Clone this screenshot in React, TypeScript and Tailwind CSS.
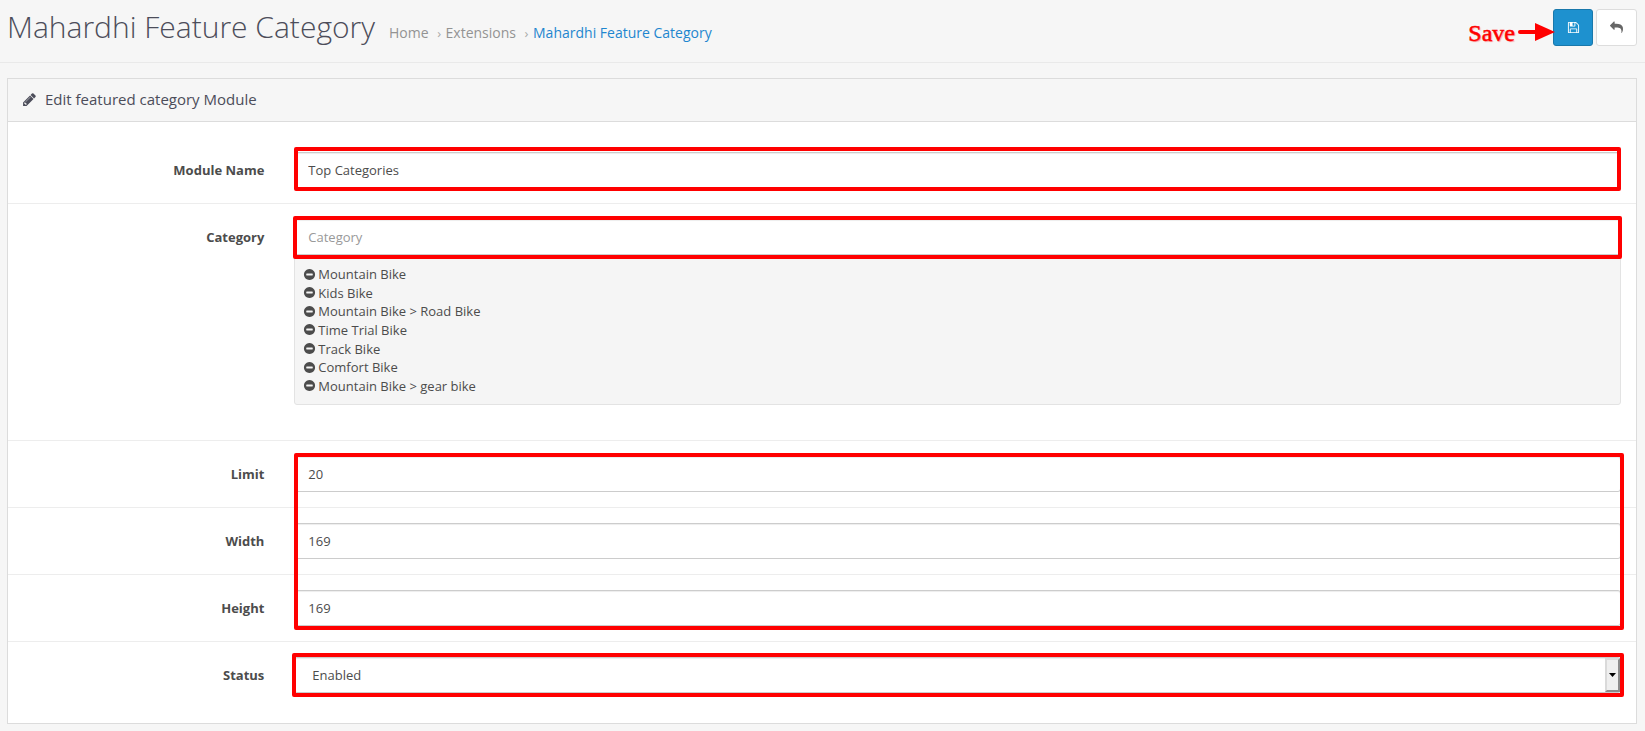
import React from "react";

const PENCIL =
  "M491 1536l91-91-235-235-91 91v107h128v128h107zm523-928q0-22-22-22-10 0-17 7l-542 542q-7 7-7 17 0 22 22 22 10 0 17-7l542-542q7-7 7-17zm-54-192l416 416-832 832h-416v-416zm683 96q0 53-37 90l-166 166-416-416 166-165q36-38 90-38 53 0 91 38l235 234q37 39 37 91z";
const FLOPPY =
  "M512 1536h768v-384h-768v384zm896 0h128v-896q0-14-10-38.5t-20-34.5l-281-281q-10-10-34-20t-39-10v416q0 40-28 68t-68 28h-576q-40 0-68-28t-28-68v-416h-128v1280h128v-416q0-40 28-68t68-28h832q40 0 68 28t28 68v416zm-384-928v-320q0-13-9.5-22.5t-22.5-9.5h-192q-13 0-22.5 9.5t-9.5 22.5v320q0 13 9.5 22.5t22.5 9.5h192q13 0 22.5-9.5t9.5-22.5zm640 32v928q0 40-28 68t-68 28h-1344q-40 0-68-28t-28-68v-1344q0-40 28-68t68-28h928q40 0 88 20t76 48l280 280q28 28 48 76t20 88z";
const REPLY =
  "M1792 1120q0 166-127 451-3 7-10.5 24t-13.5 30-13 22q-12 17-28 17-15 0-23.5-10t-8.5-25q0-9 2.5-26.5t2.5-23.5q5-68 5-123 0-101-17.5-181t-48.5-138.5-80-101-105.5-69.5-133-42.5-154-21.5-175.5-6h-224v256q0 26-19 45t-45 19-45-19l-512-512q-19-19-19-45t19-45l512-512q19-19 45-19t45 19 19 45v256h224q713 0 875 403 53 134 53 333z";
const MINUS_CIRCLE =
  "M1344 960v-128q0-26-19-45t-45-19h-768q-26 0-45 19t-19 45v128q0 26 19 45t45 19h768q26 0 45-19t19-45zm320-64q0 209-103 385.5t-279.5 279.5-385.5 103-385.5-103-279.5-279.5-103-385.5 103-385.5 279.5-279.5 385.5-103 385.5 103 279.5 279.5 103 385.5z";

function Icon({ path, className }: { path: string; className: string }) {
  return (
    <svg viewBox="0 0 1792 1792" fill="currentColor" aria-hidden="true" className={className}>
      <path d={path} />
    </svg>
  );
}

const CATEGORIES = [
  "Mountain Bike",
  "Kids Bike",
  "Mountain Bike > Road Bike",
  "Time Trial Bike",
  "Track Bike",
  "Comfort Bike",
  "Mountain Bike > gear bike",
];

const CONTROL =
  "block h-9 w-full rounded-[3px] border border-[#cccccc] bg-white text-[13px] text-[#4c4c4c] shadow-[inset_0_1px_1px_rgba(0,0,0,0.075)] outline-none placeholder:text-[#999999]";

function Highlight({ className }: { className: string }) {
  return (
    <span
      aria-hidden="true"
      className={`pointer-events-none absolute rounded-[2px] border-4 border-[#ff0000] ${className}`}
    />
  );
}

function Field({
  id,
  label,
  first = false,
  children,
}: {
  id: string;
  label: string;
  first?: boolean;
  children: React.ReactNode;
}) {
  return (
    <div className={`flex py-[15px] ${first ? "" : "border-t border-[#ededed]"}`}>
      <label htmlFor={id} className="w-1/6 shrink-0 px-[15px] pt-[9px] text-right leading-[18px] font-bold">
        {label}
      </label>
      <div className="min-w-0 flex-1 px-[15px]">{children}</div>
    </div>
  );
}

export default function App() {
  return (
    <div className="min-h-screen bg-[#f6f6f6] font-['Open_Sans',sans-serif] text-[13px] text-[#4c4c4c]">
      <header className="flex h-[63px] items-start justify-between border-b border-[#e9e9e9] pr-2 pl-[7px]">
        <div className="flex items-baseline">
          <h1 className="text-[30px] leading-[54px] font-light text-[#4c4d5a]">Mahardhi Feature Category</h1>
          <nav aria-label="Breadcrumb" className="ml-[14px]">
            <ol className="flex items-baseline text-[14px] text-[#939393]">
              <li>
                <a href="#home">Home</a>
              </li>
              <li className="flex items-baseline">
                <span className="w-[17px] pl-1 text-center text-[13px] text-[#aaaaaa]">›</span>
                <a href="#extensions">Extensions</a>
              </li>
              <li className="flex items-baseline">
                <span className="w-[17px] pl-1 text-center text-[13px] text-[#aaaaaa]">›</span>
                <a href="#feature" className="text-[#1e86cf]">
                  Mahardhi Feature Category
                </a>
              </li>
            </ol>
          </nav>
        </div>
        <div className="flex pt-[9px]">
          <div className="z-10 -mr-[2px] flex items-center gap-[3px] pt-[9px]">
            <span className="pt-px font-['Liberation_Serif',serif] text-[24px] leading-none text-[#ff0000] [-webkit-text-stroke:0.5px_#ff0000] [text-shadow:1px_1px_1px_rgba(255,0,0,0.35)]">
              Save
            </span>
            <svg viewBox="0 0 37 18" className="h-[18px] w-[37px]" aria-hidden="true">
              <path d="M2 9H20" stroke="#ff0000" strokeWidth="4" strokeLinecap="round" />
              <path d="M17 0L37 9L17 18Z" fill="#ff0000" />
            </svg>
          </div>
          <button
            type="button"
            aria-label="Save"
            className="flex h-[37px] w-10 items-center justify-center rounded-[3px] border border-[#1978ab] bg-[#1e91cf] text-white"
          >
            <Icon path={FLOPPY} className="size-[13px]" />
          </button>
          <a
            href="#back"
            aria-label="Back"
            className="ml-[3px] flex h-[37px] w-[41px] items-center justify-center rounded-[3px] border border-[#dddddd] bg-white text-[#666666]"
          >
            <Icon path={REPLY} className="size-[13px]" />
          </a>
        </div>
      </header>

      <main className="pt-[15px] pr-2 pb-[7px] pl-[7px]">
        <section className="border border-[#dcdcdc] bg-white">
          <div className="flex h-[43px] items-center border-b border-[#dcdcdc] bg-[#f6f6f6] pb-px pl-[14px] text-[#4c4d5a]">
            <Icon path={PENCIL} className="size-[15px]" />
            <h2 className="ml-2 pb-px text-[15px]">Edit featured category Module</h2>
          </div>
          <form className="py-[15px]" onSubmit={(e) => e.preventDefault()}>
            <Field id="module-name" label="Module Name" first>
              <div className="relative">
                <input id="module-name" type="text" defaultValue="Top Categories" className={`${CONTROL} px-[13px]`} />
                <Highlight className="inset-x-0 -top-[5px] -bottom-[3px]" />
              </div>
            </Field>
            <Field id="category" label="Category">
              <div className="relative">
                <input id="category" type="text" placeholder="Category" className={`${CONTROL} px-[13px]`} />
                <Highlight className="-inset-x-px -top-[3px] -bottom-1" />
              </div>
              <ul className="mb-5 flex h-[150px] flex-col justify-between rounded-[3px] border border-[#e3e3e3] bg-[#f5f5f5] px-2 py-[9px]">
                {CATEGORIES.map((name) => (
                  <li key={name} className="flex h-[18px] items-center leading-[18px]">
                    <button type="button" aria-label={`Remove ${name}`} className="mr-[2px]">
                      <Icon path={MINUS_CIRCLE} className="size-[13px]" />
                    </button>
                    {name}
                  </li>
                ))}
              </ul>
            </Field>
            <div className="relative">
              <Field id="limit" label="Limit">
                <input id="limit" type="text" defaultValue="20" className={`${CONTROL} px-[13px]`} />
              </Field>
              <Field id="width" label="Width">
                <input id="width" type="text" defaultValue="169" className={`${CONTROL} px-[13px]`} />
              </Field>
              <Field id="height" label="Height">
                <input id="height" type="text" defaultValue="169" className={`${CONTROL} px-[13px]`} />
              </Field>
              <Highlight className="top-[13px] right-3 bottom-[11px] left-[calc(100%/6+15px)]" />
            </div>
            <Field id="status" label="Status">
              <div className="relative">
                <select id="status" defaultValue="1" className={`${CONTROL} appearance-none pt-[2px] pr-5 pl-[17px]`}>
                  <option value="1">Enabled</option>
                  <option value="0">Disabled</option>
                </select>
                <span
                  aria-hidden="true"
                  className="pointer-events-none absolute inset-y-px right-px flex w-[15px] items-center justify-center border-2 border-t-[#dadada] border-r-[#8c8c8c] border-b-[#8c8c8c] border-l-[#dadada] bg-[#efefef]"
                >
                  <svg viewBox="0 0 7 4" className="h-1 w-[7px] shrink-0">
                    <path d="M0 0H7L3.5 4Z" fill="#000000" />
                  </svg>
                </span>
                <Highlight className="-top-1 -right-[3px] -bottom-1 -left-[2px]" />
              </div>
            </Field>
          </form>
        </section>
      </main>
    </div>
  );
}
